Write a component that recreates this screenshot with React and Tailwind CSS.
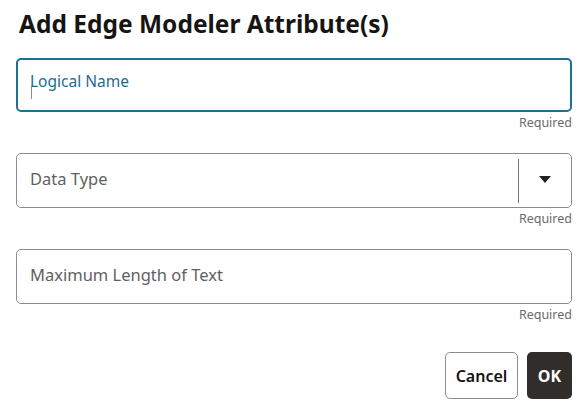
import React from 'react'

const font = { fontFamily: '"Noto Sans", "Open Sans", sans-serif' }

const Field = ({ label, active, select }) => (
  <div className="flex flex-col">
    <div
      className={`relative flex items-center rounded-[5px] bg-white ${
        active ? 'h-[54px] border-2 border-[#1b7293]' : 'h-[55px] border border-[#8b8b8b]'
      }`}
    >
      <div className={`flex-1 ${active ? 'pl-[12px]' : 'pl-[13px] pb-[3px]'}`}>
        {active ? (
          <div className="relative">
            <div className="text-[15.5px] leading-[20px] text-[#1b6d8f] -mt-[8px]">{label}</div>
            <div className="absolute left-[1px] top-[14px] h-[14px] w-px bg-[#8a8a8a]" />
          </div>
        ) : (
          <div className="text-[16.5px] text-[#5f5f5f]">{label}</div>
        )}
      </div>
      {select && (
        <>
          <div className="h-[44px] w-px bg-[#777]" />
          <div className="flex w-[52px] items-center justify-center pb-[2px]">
            <svg width="12" height="7" viewBox="0 0 12 7">
              <path d="M0 0h12L6 7z" fill="#222" />
            </svg>
          </div>
        </>
      )}
    </div>
    <div className="mt-[3px] text-right text-[12.5px] leading-[16px] text-[#6b6b6b]">Required</div>
  </div>
)

const App = () => {
  return (
    <div className="h-[407px] w-[586px] bg-white pl-[16px] pr-[14px]" style={font}>
      <h1 className="pl-[3px] pt-[7px] text-[24.5px] font-bold leading-[34px] text-[#161513]">
        Add Edge Modeler Attribute(s)
      </h1>
      <div className="mt-[17px] flex flex-col gap-[22px]">
        <Field label="Logical Name" active />
        <Field label="Data Type" select />
        <Field label="Maximum Length of Text" />
      </div>
      <div className="mt-[29px] flex justify-end gap-[9px]">
        <button className="h-[47px] w-[73px] rounded-[5px] border border-[#8b8b8b] bg-white text-[16px] font-semibold text-[#161513]">
          Cancel
        </button>
        <button className="h-[47px] w-[45px] rounded-[5px] bg-[#312d2a] text-[16px] font-bold text-white">
          OK
        </button>
      </div>
    </div>
  )
}

export default App
